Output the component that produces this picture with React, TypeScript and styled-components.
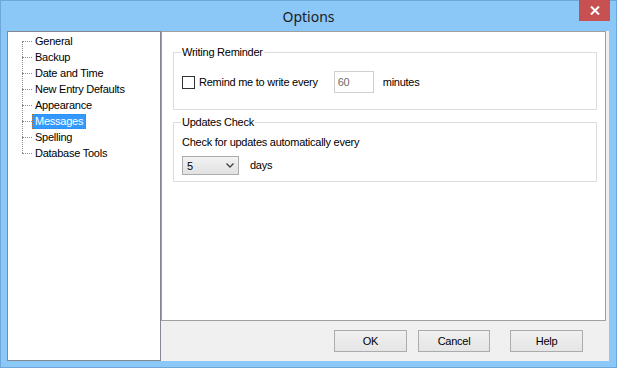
import React from "react";
import styled, { createGlobalStyle } from "styled-components";

const GlobalStyle = createGlobalStyle`
  html, body {
    margin: 0;
    padding: 0;
  }
  body {
    font-family: "Liberation Sans", Arial, sans-serif;
    font-size: 11px;
    letter-spacing: -0.25px;
    color: #000;
  }
`;

const Window = styled.div`
  width: 617px;
  height: 368px;
  box-sizing: border-box;
  background: #8bc7f7;
  border: 1px solid #6fa6d9;
  display: flex;
  flex-direction: column;
  position: relative;
`;

const TitleBar = styled.div`
  height: 30px;
  display: flex;
  align-items: center;
  justify-content: center;
  position: relative;
`;

const Title = styled.span`
  font-family: "Noto Sans", "Open Sans", sans-serif;
  font-size: 14px;
  letter-spacing: 0;
  color: #1b1b1b;
  margin-top: 1px;
`;

const CloseButton = styled.div`
  position: absolute;
  top: -1px;
  right: 6px;
  width: 31px;
  height: 21px;
  background: #c75050;
  display: flex;
  align-items: center;
  justify-content: center;
`;

const Client = styled.div`
  flex: 1;
  display: flex;
  margin: 0 7px 6px 6px;
  background: #f0f0f0;
`;

const TreePanel = styled.div`
  width: 154px;
  box-sizing: border-box;
  background: #fff;
  border: 1px solid #828790;
  padding-top: 1px;
`;

const TreeList = styled.ul`
  position: relative;
  margin: 0;
  padding: 0;
  list-style: none;

  &::before {
    content: "";
    position: absolute;
    left: 14px;
    top: 8px;
    bottom: 8px;
    border-left: 1px dotted #8a8a8a;
  }
`;

const TreeItem = styled.li`
  position: relative;
  height: 16px;
  display: flex;
  align-items: center;
  padding-left: 24px;

  &::before {
    content: "";
    position: absolute;
    left: 14px;
    top: 8px;
    width: 10px;
    border-top: 1px dotted #8a8a8a;
  }
`;

const TreeLabel = styled.span<{ $selected?: boolean }>`
  line-height: 13px;
  padding: 0 2px;
  border: 1px dotted ${(p) => (p.$selected ? "#cc6600" : "transparent")};
  background: ${(p) => (p.$selected ? "#3399ff" : "transparent")};
  color: ${(p) => (p.$selected ? "#fff" : "#000")};
`;

const RightColumn = styled.div`
  flex: 1;
  display: flex;
  flex-direction: column;
`;

const Page = styled.div`
  height: 290px;
  box-sizing: border-box;
  margin-right: 3px;
  background: #fff;
  border: 1px solid #a0a0a0;
  padding: 14px 8px 0 11px;
`;

const Group = styled.fieldset<{ $top?: number }>`
  margin: ${(p) => p.$top ?? 0}px 0 0 0;
  border: 1px solid #dcdcdc;
  padding: 0 8px;
`;

const Legend = styled.legend`
  line-height: 13px;
  padding: 0 1px;
  margin-left: -1px;
`;

const Row = styled.div<{ $pt: number; $pb: number }>`
  display: flex;
  align-items: center;
  padding-top: ${(p) => p.$pt}px;
  padding-bottom: ${(p) => p.$pb}px;
`;

const Text = styled.span<{ $ml?: number }>`
  line-height: 13px;
  margin-left: ${(p) => p.$ml ?? 0}px;
`;

const CheckBox = styled.span`
  width: 13px;
  height: 13px;
  box-sizing: border-box;
  border: 1px solid #333;
  background: #fff;
  margin-right: 4px;
`;

const NumberBox = styled.div`
  width: 40px;
  height: 22px;
  box-sizing: border-box;
  border: 1px solid #cfcfcf;
  background: #fff;
  color: #6d6d6d;
  padding-left: 3px;
  display: flex;
  align-items: center;
  margin-left: 16px;
`;

const Combo = styled.div`
  width: 57px;
  height: 19px;
  box-sizing: border-box;
  border: 1px solid #acacac;
  background: linear-gradient(#f2f2f2, #e2e2e2);
  display: flex;
  align-items: center;
  justify-content: space-between;
  padding: 0 4px 0 4px;
`;

const ButtonBar = styled.div`
  flex: 1;
  display: flex;
  justify-content: flex-end;
  align-items: flex-start;
  gap: 11px;
  padding: 9px 26px 0 0;
`;

const Button = styled.div<{ $w: number; $spaced?: boolean }>`
  width: ${(p) => p.$w}px;
  height: 22px;
  box-sizing: border-box;
  border: 1px solid #acacac;
  background: linear-gradient(#f0f0f0, #e5e5e5);
  display: flex;
  align-items: center;
  justify-content: center;
  margin-left: ${(p) => (p.$spaced ? 9 : 0)}px;
`;

const items = [
  "General",
  "Backup",
  "Date and Time",
  "New Entry Defaults",
  "Appearance",
  "Messages",
  "Spelling",
  "Database Tools",
];

export default function App() {
  return (
    <>
      <GlobalStyle />
      <Window>
        <TitleBar>
          <Title>Options</Title>
          <CloseButton>
            <svg width="10" height="9" viewBox="0 0 10 9">
              <path d="M1 0.5 L9 8.5 M9 0.5 L1 8.5" stroke="#fff" strokeWidth="2" />
            </svg>
          </CloseButton>
        </TitleBar>
        <Client>
          <TreePanel>
            <TreeList>
              {items.map((it) => (
                <TreeItem key={it}>
                  <TreeLabel $selected={it === "Messages"}>{it}</TreeLabel>
                </TreeItem>
              ))}
            </TreeList>
          </TreePanel>
          <RightColumn>
            <Page>
              <Group>
                <Legend>Writing Reminder</Legend>
                <Row $pt={12} $pb={16}>
                  <CheckBox />
                  <Text>Remind me to write every</Text>
                  <NumberBox>60</NumberBox>
                  <Text $ml={9}>minutes</Text>
                </Row>
              </Group>
              <Group $top={6}>
                <Legend>Updates Check</Legend>
                <Row $pt={7} $pb={0}>
                  <Text>Check for updates automatically every</Text>
                </Row>
                <Row $pt={7} $pb={6}>
                  <Combo>
                    <span>5</span>
                    <svg width="8" height="5" viewBox="0 0 8 5">
                      <path d="M0.5 0.5 L4 4 L7.5 0.5" stroke="#444" strokeWidth="1.4" fill="none" />
                    </svg>
                  </Combo>
                  <Text $ml={11}>days</Text>
                </Row>
              </Group>
            </Page>
            <ButtonBar>
              <Button $w={73}>OK</Button>
              <Button $w={72}>Cancel</Button>
              <Button $w={73} $spaced>Help</Button>
            </ButtonBar>
          </RightColumn>
        </Client>
      </Window>
    </>
  );
}
